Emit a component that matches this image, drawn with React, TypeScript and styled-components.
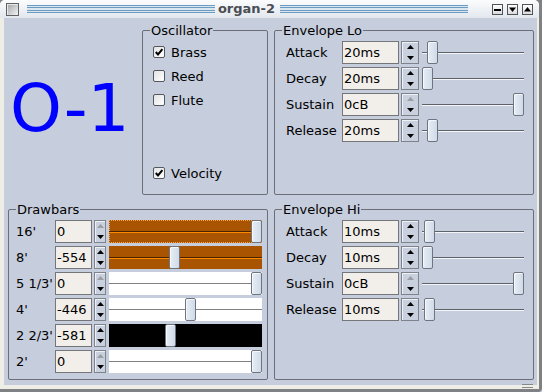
import React from 'react';
import styled, { createGlobalStyle } from 'styled-components';

const GlobalStyle = createGlobalStyle`
  html, body {
    margin: 0;
    padding: 0;
    background: #c6cddc;
  }

  body {
    font-family: 'DejaVu Sans', 'Liberation Sans', sans-serif;
    font-size: 13px;
    color: #000;
  }
`;

type Tone = 'plain' | 'orange' | 'white' | 'black';

const tones: Record<Tone, { bg: string; dark: string; light: string }> = {
  plain: { bg: 'transparent', dark: '#5d6168', light: '#f4f6f9' },
  orange: { bg: '#a95400', dark: '#4a2300', light: '#ff8a00' },
  white: { bg: '#ffffff', dark: '#808080', light: '#ffffff' },
  black: { bg: '#000000', dark: '#000000', light: '#000000' },
};

const Window = styled.div`
  position: relative;
  width: 542px;
  height: 392px;
  box-sizing: border-box;
  padding: 0 3px 3px 0;
  background: #7f8184;
  border-bottom-right-radius: 4px;
  overflow: hidden;
`;

const Shell = styled.div`
  height: 100%;
  display: flex;
  flex-direction: column;
  background: #eeede6;
  border-radius: 5px 5px 0 0;
`;

const TitleBar = styled.div`
  height: 18px;
  flex: none;
  display: flex;
  padding: 0 6px 0 6px;
  background: linear-gradient(#fbfcfd, #e3e8ee);
  border-radius: 5px 5px 0 0;
`;

const CloseBox = styled.div`
  width: 13px;
  height: 13px;
  margin-top: 3px;
  box-sizing: border-box;
  border: 1px solid #5e6166;
  background: linear-gradient(135deg, #9fa2a6, #f4f4f4);
  box-shadow: inset 1px 1px 0 #e8e8e8;
`;

const Stripe = styled.div`
  flex: 1;
  height: 8px;
  margin-top: 5px;
  background: linear-gradient(
    to bottom,
    #6b9cc4 0 1px,
    #dbe6ef 1px 2px,
    #6b9cc4 2px 3px,
    #dbe6ef 3px 5px,
    #6b9cc4 5px 6px,
    #dbe6ef 6px 7px,
    #6b9cc4 7px 8px
  );
`;

const Title = styled.div`
  margin: 0 5px 0 3px;
  font-weight: bold;
  font-size: 13px;
  line-height: 18px;
  color: #4a4e54;
`;

const WinButtons = styled.div`
  display: flex;
  gap: 4px;
  margin: 4px 0 0 24px;
`;

const WinButton = styled.div`
  width: 11px;
  height: 11px;
  box-sizing: border-box;
  border: 1px solid #505357;
  background: linear-gradient(#ffffff, #dcdcdc);
  display: flex;
  align-items: center;
  justify-content: center;
`;

const Frame = styled.div`
  flex: 1;
  display: flex;
  padding: 0 2px 4px 4px;
`;

const Content = styled.div`
  flex: 1;
  box-sizing: border-box;
  padding: 5px 3px 5px 4px;
  background: #c6cddc;
  display: grid;
  grid-template-columns: 260px 260px;
  grid-template-rows: 172px 178px;
  column-gap: 6px;
  row-gap: 7px;
`;

const TopLeft = styled.div`
  display: grid;
  grid-template-columns: 134px 126px;
`;

const BigLabel = styled.div`
  display: flex;
  align-items: center;
  padding-left: 2px;
  font-size: 66px;
  line-height: 70px;
  color: #0000ff;
`;

const Group = styled.fieldset`
  margin: 0;
  padding: 0;
  min-width: 0;
  box-sizing: border-box;
  border: 1px solid #6c6f77;
  border-radius: 2px;
  display: flex;
  flex-direction: column;
`;

const Legend = styled.legend`
  margin-left: 7px;
  padding: 0 1px;
  font-size: 13px;
  line-height: 15px;
`;

const CheckList = styled.div`
  flex: 1;
  display: flex;
  flex-direction: column;
  padding: 2px 0 9px 10px;
`;

const CheckRow = styled.div<{ $bottom?: boolean }>`
  height: 24px;
  display: flex;
  align-items: center;
  gap: 6px;
  margin-top: ${(p) => (p.$bottom ? 'auto' : '0')};
`;

const Box = styled.div`
  width: 12px;
  height: 12px;
  box-sizing: border-box;
  border: 1px solid #55585d;
  border-radius: 2px;
  background: linear-gradient(135deg, #e4e4e4, #ffffff);
  display: flex;
  align-items: center;
  justify-content: center;
`;

const Rows = styled.div<{ $left: number }>`
  display: flex;
  flex-direction: column;
  gap: 3px;
  padding: 3px 0 0 ${(p) => p.$left}px;
`;

const Row = styled.div`
  height: 23px;
  display: flex;
`;

const Label = styled.div<{ $w: number }>`
  width: ${(p) => p.$w}px;
  flex: none;
  display: flex;
  align-items: center;
  white-space: nowrap;
`;

const Field = styled.div<{ $w: number }>`
  width: ${(p) => p.$w}px;
  flex: none;
  box-sizing: border-box;
  padding-left: 1px;
  border: 1px solid #74767a;
  background: #f2eee9;
  display: flex;
  align-items: center;
`;

const Spin = styled.div<{ $w: number }>`
  width: ${(p) => p.$w}px;
  flex: none;
  margin-left: 2px;
  box-sizing: border-box;
  border: 1px solid #7e828a;
  background: #cad1de;
  box-shadow: inset 1px 1px 0 #eef1f6;
  display: flex;
  flex-direction: column;
`;

const SpinHalf = styled.div`
  flex: 1;
  display: flex;
  align-items: center;
  justify-content: center;
`;

const Track = styled.div<{ $w: number; $tone: Tone; $focus?: boolean }>`
  position: relative;
  width: ${(p) => p.$w}px;
  flex: none;
  margin-left: 3px;
  box-sizing: border-box;
  background: ${(p) => tones[p.$tone].bg};
  outline: ${(p) => (p.$focus ? '1px dotted #ffa24a' : 'none')};
  outline-offset: -1px;

  &::before {
    content: '';
    position: absolute;
    left: 0;
    right: 0;
    top: 11px;
    height: 1px;
    background: ${(p) => tones[p.$tone].dark};
    box-shadow: 0 1px 0 ${(p) => tones[p.$tone].light};
  }
`;

const Handle = styled.div`
  position: absolute;
  top: 0;
  bottom: 0;
  width: 11px;
  box-sizing: border-box;
  border: 1px solid #6e7580;
  border-radius: 2px;
  background: linear-gradient(to right, #e6edf5, #d0dbe8);
  box-shadow: inset 1px 1px 0 #f6f9fc;
`;

const Grip = styled.div`
  position: absolute;
  right: 9px;
  bottom: 4px;
  width: 11px;
  height: 4px;
  background: linear-gradient(to bottom, #85878a 0 1px, transparent 1px 3px, #85878a 3px 4px);
`;

const Arrow: React.FC<{ dir: 'up' | 'down'; off?: boolean }> = ({ dir, off }) => (
  <svg width="7" height="4" viewBox="0 0 7 4">
    <polygon
      points={dir === 'up' ? '3.5,0 7,4 0,4' : '0,0 7,0 3.5,4'}
      fill={off ? '#9a9da2' : '#000'}
    />
  </svg>
);

const Check: React.FC = () => (
  <svg width="10" height="10" viewBox="0 0 10 10">
    <path d="M1.8 5 L4 7.4 L8.4 2.2" fill="none" stroke="#000" strokeWidth="2" />
  </svg>
);

interface ParamRowProps {
  label: string;
  value: string;
  pos: number;
  upOff?: boolean;
  tone?: Tone;
  focus?: boolean;
  wide?: boolean;
}

const ParamRow: React.FC<ParamRowProps> = ({ label, value, pos, upOff, tone = 'plain', focus, wide }) => (
  <Row>
    <Label $w={wide ? 56 : 39}>{label}</Label>
    <Field $w={wide ? 57 : 37}>{value}</Field>
    <Spin $w={wide ? 18 : 12}>
      <SpinHalf>
        <Arrow dir="up" off={upOff} />
      </SpinHalf>
      <SpinHalf>
        <Arrow dir="down" />
      </SpinHalf>
    </Spin>
    <Track $w={wide ? 102 : 153} $tone={tone} $focus={focus}>
      <Handle style={{ left: `calc((100% - 11px) * ${pos})` }} />
    </Track>
  </Row>
);

const envLo = [
  { label: 'Attack', value: '20ms', pos: 5 / 91 },
  { label: 'Decay', value: '20ms', pos: 0 },
  { label: 'Sustain', value: '0cB', pos: 1, upOff: true },
  { label: 'Release', value: '20ms', pos: 5 / 91 },
];

const envHi = [
  { label: 'Attack', value: '10ms', pos: 2 / 91 },
  { label: 'Decay', value: '10ms', pos: 0 },
  { label: 'Sustain', value: '0cB', pos: 1, upOff: true },
  { label: 'Release', value: '10ms', pos: 2 / 91 },
];

const drawbars: { label: string; value: number; tone: Tone; focus?: boolean }[] = [
  { label: "16'", value: 0, tone: 'orange', focus: true },
  { label: "8'", value: -554, tone: 'orange' },
  { label: "5 1/3'", value: 0, tone: 'white' },
  { label: "4'", value: -446, tone: 'white' },
  { label: "2 2/3'", value: -581, tone: 'black' },
  { label: "2'", value: 0, tone: 'white' },
];

const oscillators = [
  { label: 'Brass', on: true },
  { label: 'Reed', on: false },
  { label: 'Flute', on: false },
];

const Envelope: React.FC<{ title: string; rows: typeof envLo }> = ({ title, rows }) => (
  <Group>
    <Legend>{title}</Legend>
    <Rows $left={11}>
      {rows.map((r) => (
        <ParamRow key={r.label} wide {...r} />
      ))}
    </Rows>
  </Group>
);

const App: React.FC = () => {
  return (
    <>
      <GlobalStyle />
      <Window>
        <Shell>
          <TitleBar>
            <CloseBox />
            <Stripe style={{ marginLeft: 8 }} />
            <Title>organ-2</Title>
            <Stripe />
            <WinButtons>
              <WinButton>
                <svg width="7" height="7" viewBox="0 0 7 7">
                  <rect x="0" y="3" width="7" height="2" fill="#000" />
                </svg>
              </WinButton>
              <WinButton>
                <svg width="7" height="7" viewBox="0 0 7 7">
                  <polygon points="0,1.5 7,1.5 3.5,6" fill="#000" />
                </svg>
              </WinButton>
              <WinButton>
                <svg width="7" height="7" viewBox="0 0 7 7">
                  <polygon points="3.5,1 7,5.5 0,5.5" fill="#000" />
                </svg>
              </WinButton>
            </WinButtons>
          </TitleBar>
          <Frame>
            <Content>
              <TopLeft>
                <BigLabel>O-1</BigLabel>
                <Group>
                  <Legend>Oscillator</Legend>
                  <CheckList>
                    {oscillators.map((o) => (
                      <CheckRow key={o.label}>
                        <Box>{o.on && <Check />}</Box>
                        {o.label}
                      </CheckRow>
                    ))}
                    <CheckRow $bottom>
                      <Box>
                        <Check />
                      </Box>
                      Velocity
                    </CheckRow>
                  </CheckList>
                </Group>
              </TopLeft>
              <Envelope title="Envelope Lo" rows={envLo} />
              <Group>
                <Legend>Drawbars</Legend>
                <Rows $left={7}>
                  {drawbars.map((d) => (
                    <ParamRow
                      key={d.label}
                      label={d.label}
                      value={String(d.value)}
                      pos={(d.value + 960) / 960}
                      upOff={d.value === 0}
                      tone={d.tone}
                      focus={d.focus}
                    />
                  ))}
                </Rows>
              </Group>
              <Envelope title="Envelope Hi" rows={envHi} />
            </Content>
          </Frame>
        </Shell>
        <Grip />
      </Window>
    </>
  );
};

export default App;
